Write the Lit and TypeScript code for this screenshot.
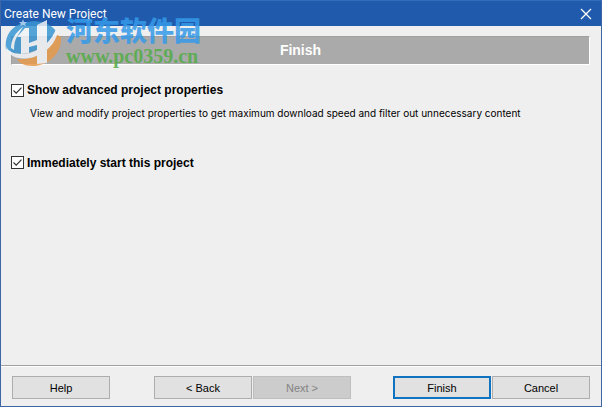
import { LitElement, html, css, svg } from "lit";
import { customElement, state } from "lit/decorators.js";

const checkMark = svg`<path d="M2.5 6.5 L5.2 9.2 L10.5 3.6" fill="none" stroke="#333" stroke-width="1.2"/>`;

@customElement("option-row")
class OptionRow extends LitElement {
  static properties = {
    label: { type: String },
    note: { type: String },
    checked: { type: Boolean },
  };
  declare label: string;
  declare note: string;
  declare checked: boolean;

  static styles = css`
    :host { display: block; }
    .row {
      display: inline-flex; align-items: center; gap: 3px;
      font: bold 12px/14px "Liberation Sans", Arial, sans-serif;
    }
    .box { display: grid; width: 13px; height: 13px; }
    .tick, .mark { grid-area: 1 / 1; width: 13px; height: 13px; margin: 0; }
    .tick { appearance: none; box-sizing: border-box; border: 1px solid #333; background: #fff; }
    .mark { pointer-events: none; visibility: hidden; }
    .tick:checked + .mark { visibility: visible; }
    .note { margin: 6px 0 0 19px; font: 10px/14px Inter, "Liberation Sans", sans-serif; }
  `;

  render() {
    return html`
      <label class="row">
        <span class="box">
          <input class="tick" type="checkbox" .checked=${this.checked}
            @change=${(e: Event) => (this.checked = (e.target as HTMLInputElement).checked)} />
          <svg class="mark" viewBox="0 0 13 13" aria-hidden="true">${checkMark}</svg>
        </span>
        ${this.label}
      </label>
      ${this.note ? html`<p class="note">${this.note}</p>` : ""}
    `;
  }
}

@customElement("site-mark")
class SiteMark extends LitElement {
  static styles = css`
    :host { display: flex; align-items: flex-end; gap: 5px; pointer-events: none; }
    .logo { width: 56px; height: 50px; flex: none; }
    .names { display: flex; flex-direction: column; white-space: nowrap; }
    .name { font: 900 27px/30px "Noto Sans CJK SC", sans-serif; color: #359ae8; }
    .site { font: bold 20px/22px "Liberation Serif", serif; color: #54ac48; }
  `;

  render() {
    return html`
      <svg class="logo" viewBox="0 0 56 50" aria-hidden="true">
        <path d="M1 32 C-1 20 6 9 18 6 C32 2 44 5 51 14 C46 24 38 31 29 34 C18 38 7 38 1 32Z" fill="#3b97d3"/>
        <path d="M49 16 L56 20 C57 35 45 49 27 49 C19 49 14 46 12 42 C30 44 44 32 49 16Z" fill="#e79a49"/>
        <path d="M6 31 C6 22 11 15 18 10 L13 18 C10 22 9 27 9 33Z" fill="#f2f5f8"/>
        <path d="M12 20 L20 11 L24 11 L24 36 L16 37 L16 20Z" fill="#f2f5f8"/>
        <path d="M32 8 L42 3 L42 46 L32 47Z" fill="#f2f5f8"/>
        <path d="M24 26 L32 23 L32 28 L24 30Z" fill="#f2f5f8"/>
        <path d="M1 29 C4 37 14 38 25 36 C38 32 47 23 51 12 L53 15 C50 27 41 36 29 40 C15 44 2 40 1 29Z" fill="#f2f5f8"/>
        <path d="M18 2 L19 5 L22 5 L20 7 L21 9 L18 8 L15 9 L16 7 L14 5 L17 5Z" fill="#b8dcf6"/>
      </svg>
      <span class="names">
        <span class="name">河东软件园</span>
        <span class="site">www.pc0359.cn</span>
      </span>
    `;
  }
}

@customElement("app-root")
class AppRoot extends LitElement {
  static styles = css`
    :host { display: block; }
    .window {
      position: relative; box-sizing: border-box; min-height: 100vh;
      display: flex; flex-direction: column;
      border: 1px solid #3c66a5; border-top-color: #2f6cba;
      background: #efefef; color: #000;
      font: 11px/14px "Liberation Sans", Arial, sans-serif;
    }
    .titlebar {
      display: flex; align-items: center; justify-content: space-between;
      height: 25px; padding: 0 9px 0 3px; background: #205aac; color: #fff;
    }
    .title { margin: 0; font: 12px/16px Roboto, "Noto Sans", sans-serif; }
    .close { display: flex; padding: 0; border: 0; background: none; color: #fff; }
    .cross { width: 12px; height: 12px; }
    .banner {
      margin: 10px 11px 0 10px; height: 27px;
      border: 1px solid; border-color: #a0a0a0 #fff #fff #a0a0a0;
      background: #aaa; color: #fff; text-align: center;
      font: bold 14px/27px "Liberation Sans", Arial, sans-serif;
    }
    .options { flex: 1; display: flex; flex-direction: column; gap: 36px; padding: 18px 10px; }
    .footer {
      display: flex; gap: 1px; padding: 10px 11px 7px;
      border-top: 1px solid #a0a0a0; box-shadow: inset 0 1px #fff;
    }
    .gap { flex: 20; }
    .gap.first { flex: 21; }
    .button {
      box-sizing: border-box; width: 98px; height: 23px; padding: 0;
      border: 1px solid #adadad; background: #e1e1e1; color: #000; font: inherit;
    }
    .button.default { border: 2px solid #0f73c0; }
    .button:disabled { background: #ccc; border-color: #bfbfbf; color: #838383; }
    .watermark { position: absolute; left: 4px; top: 14px; opacity: 0.85; }
  `;

  @state() private closed = false;

  private close = () => { this.closed = true; };

  render() {
    if (this.closed) return html``;
    return html`
      <main class="window">
        <header class="titlebar">
          <h1 class="title">Create New Project</h1>
          <button class="close" aria-label="Close" @click=${this.close}>
            <svg class="cross" viewBox="0 0 12 12" aria-hidden="true">
              <path d="M1 1 L11 11 M11 1 L1 11" stroke="currentColor" stroke-width="1.3"/>
            </svg>
          </button>
        </header>
        <div class="banner">Finish</div>
        <section class="options">
          <option-row checked label="Show advanced project properties"
            note="View and modify project properties to get maximum download speed and filter out unnecessary content"></option-row>
          <option-row checked label="Immediately start this project"></option-row>
        </section>
        <footer class="footer">
          <button class="button">Help</button>
          <span class="gap first"></span>
          <button class="button">&lt; Back</button>
          <button class="button" disabled>Next &gt;</button>
          <span class="gap"></span>
          <button class="button default" @click=${this.close}>Finish</button>
          <button class="button" @click=${this.close}>Cancel</button>
        </footer>
        <site-mark class="watermark"></site-mark>
      </main>
    `;
  }
}
